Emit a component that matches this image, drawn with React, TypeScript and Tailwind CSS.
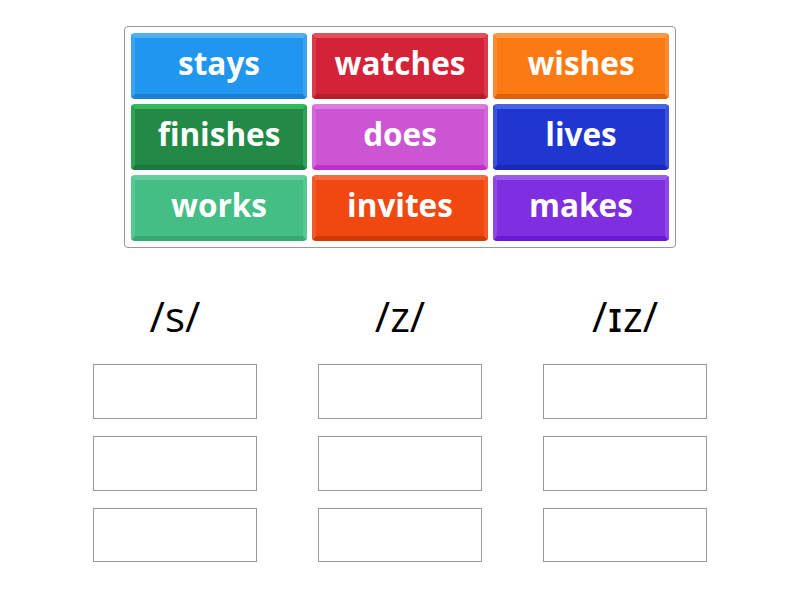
import React from 'react';

const tiles = [
  { word: 'stays', cls: 'bg-[#2196ee] border-t-[#52b0f2] border-x-[#3ba2f0] border-b-[#1a80d6]' },
  { word: 'watches', cls: 'bg-[#d42238] border-t-[#e2505e] border-x-[#dc3a4a] border-b-[#b81c2c]' },
  { word: 'wishes', cls: 'bg-[#fc7a14] border-t-[#fd9846] border-x-[#fd8a2e] border-b-[#e06208]' },
  { word: 'finishes', cls: 'bg-[#228a46] border-t-[#33b85e] border-x-[#2ca454] border-b-[#1d783c]' },
  { word: 'does', cls: 'bg-[#cc55d4] border-t-[#da7ce0] border-x-[#d468da] border-b-[#c030c8]' },
  { word: 'lives', cls: 'bg-[#1f36d0] border-t-[#4c64e2] border-x-[#3a52dc] border-b-[#1a2ab6]' },
  { word: 'works', cls: 'bg-[#44be84] border-t-[#64ce9c] border-x-[#58c892] border-b-[#38a870]' },
  { word: 'invites', cls: 'bg-[#f04810] border-t-[#f56a3a] border-x-[#f25a26] border-b-[#d03a08]' },
  { word: 'makes', cls: 'bg-[#7f2fe0] border-t-[#9a5cea] border-x-[#8e48e6] border-b-[#6a1ad0]' },
];

const groups = ['/s/', '/z/', '/ɪz/'];

export default function App() {
  return (
    <div className="w-[800px] h-[600px] bg-white font-['Open_Sans','DejaVu_Sans',sans-serif]">
      <div className="pt-[26px] flex justify-center">
        <div className="w-[552px] rounded-[4px] border border-[#999] p-[6px] grid grid-cols-3 gap-[5px]">
          {tiles.map((t) => (
            <div
              key={t.word}
              className={`h-[66px] rounded-[4px] border-t-[5px] border-b-[5px] border-x-[4px] flex items-center justify-center text-white font-bold text-[31.5px] leading-none pb-[7px] ${t.cls}`}
            >
              {t.word}
            </div>
          ))}
        </div>
      </div>
      <div className="mt-[40px] flex justify-center gap-[61px]">
        {groups.map((g) => (
          <div key={g} className="w-[164px] flex flex-col">
            <div className="h-[56px] leading-[56px] text-center text-[42px] text-black">{g}</div>
            <div className="mt-[20px] flex flex-col gap-[17px]">
              <div className="h-[55px] border border-[#999]" />
              <div className="h-[55px] border border-[#999]" />
              <div className="h-[54px] border border-[#999]" />
            </div>
          </div>
        ))}
      </div>
    </div>
  );
}
